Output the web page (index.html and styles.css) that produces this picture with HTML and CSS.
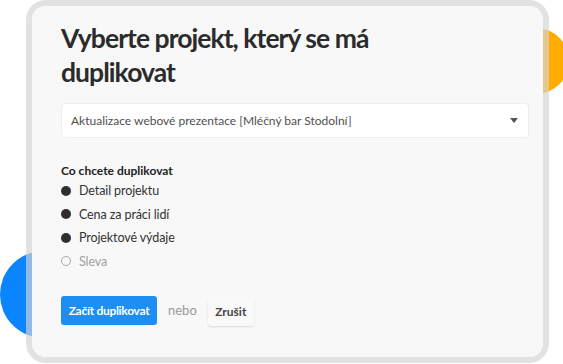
FILE: index.html
```html
<!DOCTYPE html>
<html lang="cs">
<head>
<meta charset="utf-8">
<title>Duplikovat projekt</title>
<link rel="stylesheet" href="styles.css">
</head>
<body>
<div class="stage">
  <div class="blob blob-orange"></div>
  <div class="blob blob-blue"></div>
  <div class="frame">
    <div class="card">
      <h1 class="title">Vyberte projekt, který se má duplikovat</h1>
      <div class="select">
        <span class="select-text">Aktualizace webové prezentace [Mléčný bar Stodolní]</span>
        <span class="caret"></span>
      </div>
      <div class="section-label">Co chcete duplikovat</div>
      <ul class="options">
        <li class="option"><span class="dot"></span>Detail projektu</li>
        <li class="option"><span class="dot"></span>Cena za práci lidí</li>
        <li class="option"><span class="dot"></span>Projektové výdaje</li>
        <li class="option option-off"><span class="dot dot-off"></span>Sleva</li>
      </ul>
      <div class="actions">
        <button class="btn btn-primary">Začít duplikovat</button>
        <span class="or">nebo</span>
        <button class="btn btn-cancel">Zrušit</button>
      </div>
    </div>
  </div>
</div>
</body>
</html>
```

FILE: styles.css
```css
* { box-sizing: border-box; }
html, body { margin: 0; padding: 0; background: #ffffff; }
body { font-family: Lato, "Open Sans", sans-serif; color: #2a2a2a; }

.stage {
  position: relative;
  width: 563px;
  height: 364px;
  overflow: hidden;
}

.blob {
  position: absolute;
  border-radius: 50%;
  z-index: 0;
}
.blob-orange {
  left: 503px;
  top: 28px;
  width: 66px;
  height: 66px;
  background: #ffab00;
}
.blob-blue {
  left: 0;
  top: 251px;
  width: 88px;
  height: 87px;
  background: #0a84ff;
}

.frame {
  position: relative;
  z-index: 1;
  margin-left: 26px;
  width: 523px;
  height: 363px;
  border: 6px solid rgba(212, 212, 212, 0.68);
  border-radius: 20px;
}

.card {
  height: 100%;
  background: #f8f8f8;
  border-radius: 14px;
  padding: 15px 14px 0 29px;
}

.title {
  margin: 0;
  font-size: 26.5px;
  line-height: 34px;
  font-weight: 700;
  letter-spacing: -0.95px;
  color: #2b2b2b;
  width: 330px;
}

.select {
  margin-top: 14px;
  height: 35px;
  background: #ffffff;
  border: 1px solid #eeeeee;
  border-radius: 4px;
  display: flex;
  align-items: center;
  padding: 0 10px 0 9px;
}
.select-text {
  flex: 1;
  font-size: 12px;
  color: #505050;
}
.caret {
  width: 0;
  height: 0;
  border-left: 4px solid transparent;
  border-right: 4px solid transparent;
  border-top: 5px solid #555555;
}

.section-label {
  margin-top: 25px;
  font-size: 12px;
  font-weight: 700;
  color: #222222;
  line-height: 16px;
}

.options {
  list-style: none;
  margin: 0;
  padding: 0;
}
.option {
  display: flex;
  align-items: center;
  gap: 8px;
  height: 23.5px;
  font-size: 12.5px;
  letter-spacing: -0.1px;
  color: #333333;
}
.dot {
  width: 10px;
  height: 10px;
  border-radius: 50%;
  background: #2f2f2f;
  flex: none;
}
.dot-off {
  background: transparent;
  border: 1.5px solid #a8a8a8;
}
.option-off { color: #a0a0a0; }

.actions {
  margin-top: 21px;
  display: flex;
  align-items: center;
}
.btn {
  font-family: inherit;
  font-size: 12px;
  font-weight: 700;
  border: none;
  border-radius: 3px;
  height: 29px;
  white-space: nowrap;
  padding: 0;
}
.btn-primary {
  background: #1e8ef2;
  color: #ffffff;
  width: 96px;
  letter-spacing: -0.3px;
}
.or {
  margin: 0 11px;
  font-size: 13px;
  color: #9a9a9a;
}
.btn-cancel {
  background: #f9f9f9;
  color: #444444;
  width: 46px;
  margin-top: 3px;
  box-shadow: 0 1px 2px rgba(0,0,0,0.12);
}
```
